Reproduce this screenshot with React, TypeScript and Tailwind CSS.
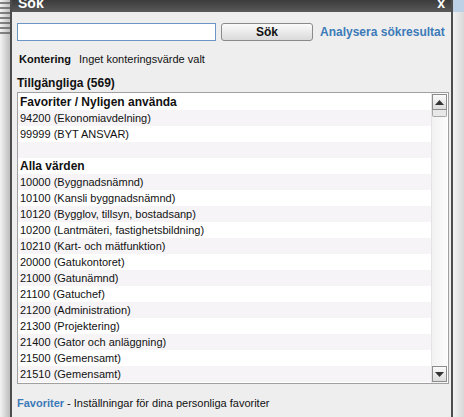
import React from "react";

const rows: { text: string; bold?: boolean }[] = [
  { text: "Favoriter / Nyligen använda", bold: true },
  { text: "94200 (Ekonomiavdelning)" },
  { text: "99999 (BYT ANSVAR)" },
  { text: "" },
  { text: "Alla värden", bold: true },
  { text: "10000 (Byggnadsnämnd)" },
  { text: "10100 (Kansli byggnadsnämnd)" },
  { text: "10120 (Bygglov, tillsyn, bostadsanp)" },
  { text: "10200 (Lantmäteri, fastighetsbildning)" },
  { text: "10210 (Kart- och mätfunktion)" },
  { text: "20000 (Gatukontoret)" },
  { text: "21000 (Gatunämnd)" },
  { text: "21100 (Gatuchef)" },
  { text: "21200 (Administration)" },
  { text: "21300 (Projektering)" },
  { text: "21400 (Gator och anläggning)" },
  { text: "21500 (Gemensamt)" },
  { text: "21510 (Gemensamt)" },
];

function ScrollArrow({ up }: { up?: boolean }) {
  return (
    <div className="h-[16px] w-[15px] border border-[#8c8c8c] bg-gradient-to-b from-[#fafafa] to-[#dcdcdc] flex items-center justify-center">
      <svg width="9" height="5" viewBox="0 0 9 5">
        {up ? <path d="M0 5 L4.5 0 L9 5 Z" fill="#333" /> : <path d="M0 0 L4.5 5 L9 0 Z" fill="#333" />}
      </svg>
    </div>
  );
}

export default function App() {
  return (
    <div
      className="w-[464px] h-[417px] overflow-hidden flex bg-[#d4d4d4] text-[11px] text-[#111]"
      style={{ fontFamily: '"Liberation Sans", Arial, sans-serif' }}
    >
      {/* page behind, left */}
      <div className="w-[10px] flex flex-col bg-gradient-to-r from-[#f4f4f4] to-[#bcbcbc]">
        <div className="flex flex-col gap-[3px] pt-[2px]">
          {[0, 1, 2, 3, 4, 5, 6].map((i) => (
            <div key={i} className="h-[2px] bg-[#555] opacity-70" />
          ))}
        </div>
      </div>

      {/* dialog */}
      <div className="w-[443px] flex flex-col border-x-2 border-[#4d4d4d] bg-[#eeeeee]">
        <div className="h-[12px] bg-gradient-to-b from-[#3b3b3b] to-[#5a5a5a] flex justify-between px-[6px] overflow-hidden">
          <span className="text-white font-bold text-[14px] leading-[14px] mt-[-4px]">Sök</span>
          <span className="text-white font-bold text-[14px] leading-[14px] mt-[-4px]">x</span>
        </div>

        <div className="flex flex-col pl-[5px] pr-[5px] pt-[11px]">
          <div className="flex items-center h-[18px]">
            <input className="w-[199px] h-[18px] border border-[#6d96c7] bg-white outline-none" />
            <button className="ml-[5px] w-[92px] h-[18px] rounded-[3px] border border-[#8a8a8a] bg-gradient-to-b from-[#fbfbfb] to-[#dadada] font-bold text-[12px] leading-none">
              Sök
            </button>
            <span className="ml-[7px] font-bold text-[12px] text-[#3c7ab8] whitespace-nowrap">Analysera sökresultat</span>
          </div>

          <div className="flex items-center mt-[11px] ml-[2px] h-[14px]">
            <span className="font-bold">Kontering</span>
            <span className="ml-[8px]">Inget konteringsvärde valt</span>
          </div>

          <div className="mt-[10px] h-[14px] font-bold text-[12px] leading-[14px]">Tillgängliga (569)</div>

          <div className="mt-[2px] w-[432px] h-[292px] border border-[#a0a0a0] bg-white flex">
            <div className="flex-1 flex flex-col pt-[1px]">
              {rows.map((r, i) => (
                <div
                  key={i}
                  className={`h-[16px] leading-[16px] pl-[2px] whitespace-nowrap ${i % 2 === 1 ? "bg-[#f6f4f6]" : "bg-white"} ${r.bold ? "font-bold text-[12px]" : ""}`}
                >
                  {r.text}
                </div>
              ))}
            </div>
            <div className="w-[16px] mr-[1px] pt-[1px] pb-[1px] flex flex-col bg-gradient-to-r from-[#f2f2f2] to-[#fbfbfb] border-l border-[#e4e4e4]">
              <ScrollArrow up />
              <div className="h-[7px] w-[15px] rounded-b-[2px] border border-t-0 border-[#a8a8a8] bg-[#e8e8e8]" />
              <div className="flex-1" />
              <ScrollArrow />
            </div>
          </div>

          <div className="mt-[12px] flex items-center h-[14px]">
            <span className="font-bold text-[#3c7ab8]">Favoriter</span>
            <span className="ml-[3px]">- Inställningar för dina personliga favoriter</span>
          </div>
        </div>
      </div>

      {/* page behind, right */}
      <div className="flex-1 flex flex-col">
        <div className="h-[12px] bg-[#bcd0e6]" />
        <div className="flex-1 bg-gradient-to-r from-[#f2f2f2] to-[#d8d8d8]" />
      </div>
    </div>
  );
}
